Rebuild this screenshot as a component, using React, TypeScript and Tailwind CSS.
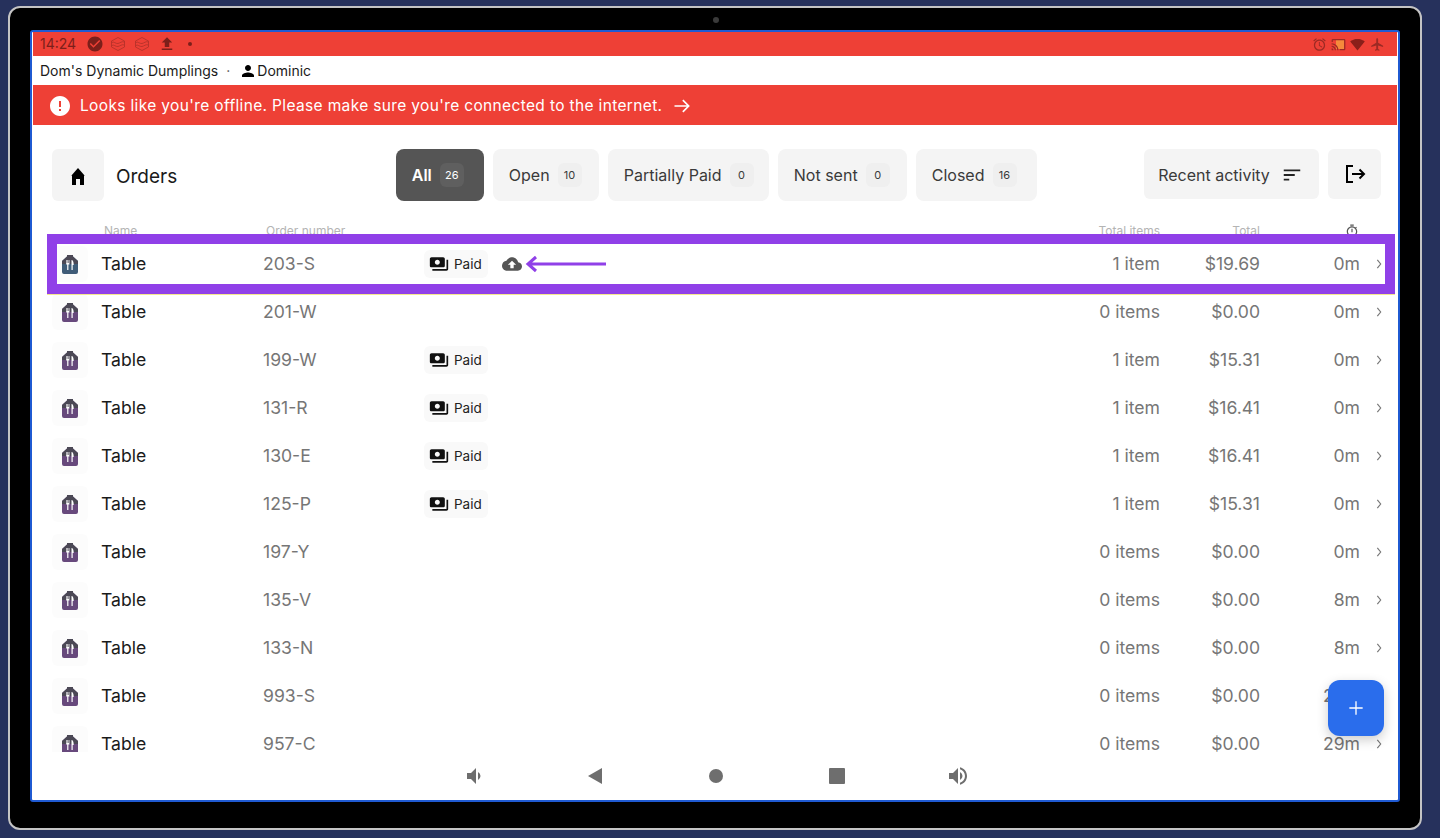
import React from "react";

const P = {
  check: "M12 2C6.48 2 2 6.48 2 12s4.48 10 10 10 10-4.48 10-10S17.52 2 12 2zm-2 15l-5-5 1.41-1.41L10 14.17l7.59-7.59L19 8l-9 9z",
  upload: "M9 16h6v-6h4l-7-7-7 7h4zm-4 2h14v2H5z",
  alarm: "M22 5.72l-4.6-3.86-1.29 1.53 4.6 3.86L22 5.72zM7.88 3.39L6.6 1.86 2 5.71l1.29 1.53 4.59-3.85zM12.5 8H11v6l4.75 2.85.75-1.23-4-2.37V8zM12 4c-4.97 0-9 4.03-9 9s4.03 9 9 9 9-4.03 9-9-4.03-9-9-9zm0 16c-3.87 0-7-3.13-7-7s3.13-7 7-7 7 3.13 7 7-3.13 7-7 7z",
  cast: "M1 18v3h3c0-1.66-1.34-3-3-3zm0-4v2c2.76 0 5 2.24 5 5h2c0-3.87-3.13-7-7-7zM1 10v2c4.97 0 9 4.03 9 9h2c0-6.08-4.93-11-11-11zm20-7H3c-1.1 0-2 .9-2 2v3h2V5h18v14h-7v2h7c1.1 0 2-.9 2-2V5c0-1.1-.9-2-2-2z",
  wifi: "M12.01 21.49L23.64 7c-.45-.34-4.93-4-11.64-4C5.28 3 .81 6.66.36 7l11.63 14.49.01.01.01-.01z",
  plane: "M21 16v-2l-8-5V3.5c0-.83-.67-1.5-1.5-1.5S10 2.67 10 3.5V9l-8 5v2l8-2.5V19l-2 1.5V22l3.5-1 3.5 1v-1.5L13 19v-5.5l8 2.5z",
  person: "M12 12c2.21 0 4-1.79 4-4s-1.79-4-4-4-4 1.79-4 4 1.79 4 4 4zm0 2c-2.67 0-8 1.34-8 4v2h16v-2c0-2.66-5.33-4-8-4z",
  error: "M12 2C6.48 2 2 6.48 2 12s4.48 10 10 10 10-4.48 10-10S17.52 2 12 2zm1 15h-2v-2h2v2zm0-4h-2V7h2v6z",
  sort: "M3 18h6v-2H3v2zM3 6v2h18V6H3zm0 7h12v-2H3v2z",
  payments: "M19 14V6c0-1.1-.9-2-2-2H3c-1.1 0-2 .9-2 2v8c0 1.1.9 2 2 2h14c1.1 0 2-.9 2-2zm-9-1c-1.66 0-3-1.34-3-3s1.34-3 3-3 3 1.34 3 3-1.34 3-3 3zm13-6v11c0 1.1-.9 2-2 2H4v-2h17V7h2z",
  cloud: "M19.35 10.04C18.67 6.59 15.64 4 12 4 9.11 4 6.6 5.64 5.35 8.04 2.34 8.36 0 10.91 0 14c0 3.31 2.69 6 6 6h13c2.76 0 5-2.24 5-5 0-2.64-2.05-4.78-4.65-4.96zM14 13v4h-4v-4H7l5-5 5 5h-3z",
  timer: "M15 1H9v2h6V1zm-4 13h2V8h-2v6zm8.03-6.61l1.42-1.42c-.43-.51-.9-.99-1.41-1.41l-1.42 1.42C16.07 4.74 14.12 4 12 4c-4.97 0-9 4.03-9 9s4.02 9 9 9 9-4.03 9-9c0-2.12-.74-4.07-1.97-5.61zM12 20c-3.87 0-7-3.13-7-7s3.13-7 7-7 7 3.13 7 7-3.13 7-7 7z",
  home: "M6 21v-9.5L5 12 12 4l7 8-1-.5V21h-4v-6h-4v6z",
  volDown: "M18.5 12A4.5 4.5 0 0 0 16 7.97v8.05A4.5 4.5 0 0 0 18.5 12zM5 9v6h4l5 5V4L9 9H5z",
  volUp: "M3 9v6h4l5 5V4L7 9H3zm13.5 3A4.5 4.5 0 0 0 14 7.97v8.05A4.47 4.47 0 0 0 16.5 12zM14 3.23v2.06c2.89.86 5 3.54 5 6.71s-2.11 5.85-5 6.71v2.06c4.01-.91 7-4.49 7-8.77s-2.99-7.86-7-8.77z",
};

function Icon({ d, className }: { d: string; className: string }) {
  return (
    <svg viewBox="0 0 24 24" fill="currentColor" className={className}>
      <path d={d} />
    </svg>
  );
}

function Layers() {
  return (
    <svg viewBox="0 0 16 16" fill="none" stroke="currentColor" strokeWidth="0.9" className="h-4 w-4 text-[#b5322a]">
      <path d="M8 1.5 14.5 5v6L8 14.5 1.5 11V5z" />
      <path d="M1.5 6.5c2.5-1.5 4 1.5 6.5 1s3.5-2.5 6.5-1.5M1.5 9.5c2.5-1.5 4 1.5 6.5 1s3.5-2.5 6.5-1.5" />
    </svg>
  );
}

function TableIcon({ blue }: { blue?: boolean }) {
  return (
    <div className="flex h-9 w-9 shrink-0 items-center justify-center rounded-md bg-[#fcfcfc]">
      <svg viewBox="0 0 20 22" className="h-[22px] w-5">
        <path d="M2 8 L7 3.5 L7 2 L13 2 L13 3.5 L18 8 L18 19 Q18 21 16 21 L4 21 Q2 21 2 19Z" fill={blue ? "#3f5c78" : "#67497c"} />
        <path d="M2 8 L7 3.5 L7 2 L13 2 L13 3.5 L18 8 L18 11 L2 11Z" fill="#4b4855" />
        <path d="M6.2 7v4.5h1v5.5h1.2v-5.5h1V7h-.8v3h-.6V7h-.6v3h-.6V7zM11.5 7c1.6 0 2.2 2 2.2 5h-1v5h-1.2z" fill="#ffffff" />
      </svg>
    </div>
  );
}

const tabs = [
  { label: "All", count: "26", active: true, w: "w-[88px]" },
  { label: "Open", count: "10", w: "w-[106px]" },
  { label: "Partially Paid", count: "0", w: "w-[161px]" },
  { label: "Not sent", count: "0", w: "w-[129px]" },
  { label: "Closed", count: "16", w: "w-[121px]" },
];

const rows = [
  ["203-S", true, "1 item", "$19.69", "0m"],
  ["201-W", false, "0 items", "$0.00", "0m"],
  ["199-W", true, "1 item", "$15.31", "0m"],
  ["131-R", true, "1 item", "$16.41", "0m"],
  ["130-E", true, "1 item", "$16.41", "0m"],
  ["125-P", true, "1 item", "$15.31", "0m"],
  ["197-Y", false, "0 items", "$0.00", "0m"],
  ["135-V", false, "0 items", "$0.00", "8m"],
  ["133-N", false, "0 items", "$0.00", "8m"],
  ["993-S", false, "0 items", "$0.00", "29m"],
  ["957-C", false, "0 items", "$0.00", "29m"],
] as const;

export default function App() {
  return (
    <div className="h-[838px] w-[1440px] overflow-hidden bg-[#26315c] pl-2 pt-1.5 font-['Inter',sans-serif]">
      <div className="relative h-[824px] w-[1414px] rounded-xl border-2 border-[#c4c4c4] bg-black pl-5 pt-[22px]">
        <span className="absolute left-[703px] top-[9px] h-1.5 w-1.5 rounded-full bg-[#3a3a3a]" />
        <div className="relative flex h-[772px] w-[1370px] flex-col overflow-hidden rounded-[3px] border-2 border-[#1f5ad2] bg-white pl-px pr-px">
          {/* status bar */}
          <div className="flex h-6 shrink-0 items-center justify-between bg-[#ee4036] pl-[7px] pr-3 text-[#7c1f1a]">
            <div className="flex items-center">
              <span className="text-[14px] leading-none">14:24</span>
              <Icon d={P.check} className="ml-2.5 h-[18px] w-[18px] text-[#7c1f1a]" />
              <span className="ml-1.5"><Layers /></span>
              <span className="ml-2"><Layers /></span>
              <Icon d={P.upload} className="ml-2 h-[18px] w-[18px] text-[#7c1f1a]" />
              <span className="ml-3 h-1 w-1 rounded-full bg-[#7c1f1a]" />
            </div>
            <div className="flex items-center text-[#9c2a24]">
              <Icon d={P.alarm} className="h-[15px] w-[15px]" />
              <span className="relative ml-1 h-[15px] w-[15px]">
                <span className="absolute left-[5px] top-[3px] h-[9px] w-[8px] bg-[#f58a3c]" />
                <Icon d={P.cast} className="absolute inset-0 h-[15px] w-[15px]" />
              </span>
              <Icon d={P.wifi} className="ml-1 h-[15px] w-[15px] text-[#8a1f1a]" />
              <Icon d={P.plane} className="ml-[5px] h-[15px] w-[15px]" />
            </div>
          </div>

          {/* account line */}
          <div className="flex h-[29px] shrink-0 items-center pl-[7px] text-[14px] text-[#1a1a1a]">
            <span>Dom's Dynamic Dumplings</span>
            <span className="ml-2 text-[#555]">·</span>
            <Icon d={P.person} className="ml-[9px] h-[18px] w-[18px] text-black" />
            <span>Dominic</span>
          </div>

          {/* offline banner */}
          <div className="flex h-10 shrink-0 items-center bg-[#ee4036] pl-[15px] pt-px text-[15.5px] tracking-[0.35px] text-white">
            <Icon d={P.error} className="h-6 w-6" />
            <span className="ml-2">Looks like you're offline. Please make sure you're connected to the internet.</span>
            <svg viewBox="0 0 24 24" className="ml-2.5 h-5 w-5" fill="none" stroke="currentColor" strokeWidth="2">
              <path d="M3 12h17M13 5l7 7-7 7" />
            </svg>
          </div>

          {/* toolbar */}
          <div className="flex h-[100px] shrink-0 items-start pl-[19px] pt-6">
            <div className="flex h-[52px] w-[52px] items-center justify-center rounded-md bg-[#f4f4f4] pt-0.5">
              <Icon d={P.home} className="h-6 w-6 text-black" />
            </div>
            <span className="ml-3 mt-[15px] text-[19px] leading-[26px] text-[#1a1a1a]">Orders</span>
            <div className="ml-[219px] flex gap-[9px]">
              {tabs.map((t) => (
                <div
                  key={t.label}
                  className={`flex h-[52px] items-center gap-2 rounded-lg pl-[15.5px] text-[16px] ${t.w} ${
                    t.active ? "bg-[#555555] font-semibold text-white" : "bg-[#f4f4f4] text-[#3a3a3a]"
                  }`}
                >
                  <span>{t.label}</span>
                  <span
                    className={`flex h-6 w-6 items-center justify-center rounded-md pt-px text-[11px] font-normal ${
                      t.active ? "bg-[#5f5f5f] text-white" : "bg-[#efefef] text-[#3a3a3a]"
                    }`}
                  >
                    {t.count}
                  </span>
                </div>
              ))}
            </div>
            <div className="ml-auto flex gap-[9px] pr-[16px]">
              <div className="flex h-[50px] w-[175px] items-center justify-center gap-[11px] rounded-md bg-[#f4f4f4] pr-0.5 pt-0.5 text-[16px] text-[#3a3a3a]">
                <span>Recent activity</span>
                <Icon d={P.sort} className="h-[22px] w-[22px] text-[#222222]" />
              </div>
              <div className="flex h-[50px] w-[53px] items-center justify-center rounded-md bg-[#f4f4f4]">
                <svg viewBox="0 0 24 24" className="h-6 w-6 text-black" fill="none" stroke="currentColor" strokeWidth="2">
                  <path d="M10 4H4v16h6M9 12h12M16.5 7.5 21 12l-4.5 4.5" />
                </svg>
              </div>
            </div>
          </div>

          {/* column heads */}
          <div className="flex h-[15px] shrink-0 items-center pl-[71px] pr-[37px] text-[12px] leading-none text-[#b4b4b4]">
            <span className="-mt-1 w-[162px]">Name</span>
            <span className="-mt-1 flex-1">Order number</span>
            <span className="-mt-1 w-[100px] text-right">Total items</span>
            <span className="-mt-1 w-[100px] text-right">Total</span>
            <span className="-mt-1 flex w-[100px] justify-end pr-px text-[#555555]">
              <Icon d={P.timer} className="h-3.5 w-3.5" />
            </span>
          </div>

          <div className="relative flex-1 overflow-hidden">
            <div className="flex flex-col">
              {rows.map(([num, paid, items, total, time], i) => (
                <div key={num} className="flex h-12 shrink-0 items-center pl-[19px] pr-[14px] text-[17.6px] text-[#767676]">
                  <TableIcon blue={i === 0} />
                  <span className="ml-[13px] w-[162px] text-[#1a1a1a]">Table</span>
                  <span className="w-[161px]">{num}</span>
                  <span className="flex flex-1 items-center">
                    {paid && (
                      <span className="flex h-7 items-center gap-[5px] rounded-md bg-[#f9f9f9] pl-[5px] pr-1.5 text-[13.5px] text-[#222222]">
                        <Icon d={P.payments} className="h-5 w-5 text-[#111111]" />
                        Paid
                      </span>
                    )}
                    {i === 0 && (
                      <>
                        <Icon d={P.cloud} className="ml-3.5 h-5 w-5 text-[#555555]" />
                        <svg viewBox="0 0 83 20" className="ml-[3px] h-5 w-[83px] text-[#9040e8]" fill="none" stroke="currentColor" strokeWidth="3">
                          <path d="M81 10H3M11 3 3 10l8 7" />
                        </svg>
                      </>
                    )}
                  </span>
                  <span className="w-[100px] text-right">{items}</span>
                  <span className="w-[100px] text-right">{total}</span>
                  <span className="w-[100px] text-right">{time}</span>
                  <svg viewBox="0 0 8 12" className="ml-[15px] h-2.5 w-2 text-[#777777]" fill="none" stroke="currentColor" strokeWidth="1.4">
                    <path d="M2 1l4 5-4 5" />
                  </svg>
                </div>
              ))}
            </div>
          </div>

          {/* android nav */}
          <div className="flex h-12 shrink-0 items-center justify-center gap-[97px] bg-white pl-0.5 text-[#6e6e6e]">
            <Icon d={P.volDown} className="h-6 w-6" />
            <svg viewBox="0 0 24 24" className="h-6 w-6" fill="currentColor"><path d="M19 4v16L5 12z" /></svg>
            <svg viewBox="0 0 24 24" className="h-6 w-6" fill="currentColor"><circle cx="12" cy="12" r="7" /></svg>
            <svg viewBox="0 0 24 24" className="h-6 w-6" fill="currentColor"><rect x="4" y="4" width="16" height="16" rx="1" /></svg>
            <Icon d={P.volUp} className="h-6 w-6" />
          </div>

          {/* fab */}
          <div className="absolute left-[1296px] top-[648px] flex h-14 w-14 items-center justify-center rounded-xl bg-[#2a6dec] shadow-[0_4px_12px_rgba(0,0,0,0.2)]">
            <svg viewBox="0 0 24 24" className="h-5 w-5 text-white" fill="none" stroke="currentColor" strokeWidth="1.6">
              <path d="M12 4v16M4 12h16" />
            </svg>
          </div>

          {/* highlight */}
          <div className="pointer-events-none absolute left-[15px] top-[202px] h-[61px] w-[1348px] border-b border-[#f3e88f]">
            <div className="h-[60px] border-[10px] border-[#9040e8]" />
          </div>
        </div>
      </div>
    </div>
  );
}
